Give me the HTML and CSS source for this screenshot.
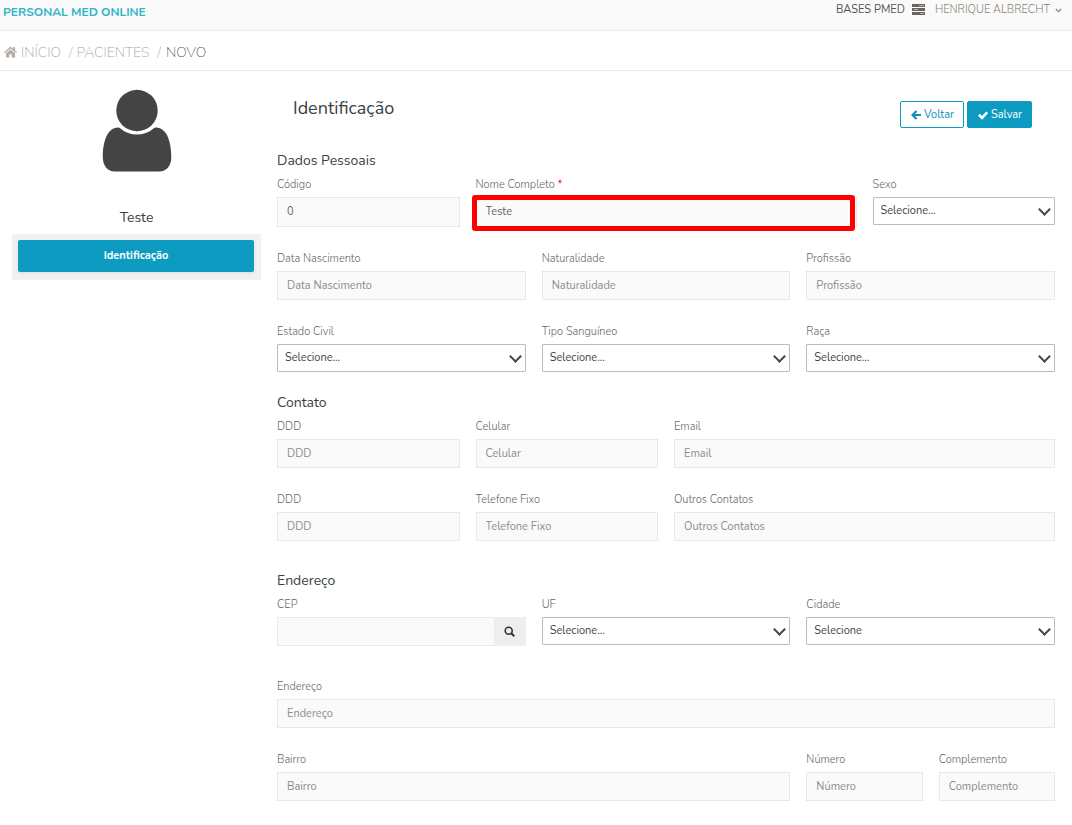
FILE: index.html
```html
<!DOCTYPE html>
<html lang="pt-BR">
<head>
<meta charset="utf-8">
<meta name="viewport" content="width=device-width, initial-scale=1">
<title>Personal Med Online</title>
<link rel="stylesheet" href="styles.css">
</head>
<body>
<header class="topbar">
  <a class="brand" href="#">PERSONAL MED ONLINE</a>
  <nav class="account">
    <a class="bases" href="#">BASES PMED
      <svg class="icon-server" viewBox="0 0 13 11" aria-hidden="true"><path d="M0 0h13v3H0zM0 4h13v3H0zM0 8h13v3H0z"/><path class="slot" d="M7 1h5v1H7zM2 5h4v1H2zM8 9h4v1H8z"/></svg>
    </a>
    <button class="user" type="button">HENRIQUE ALBRECHT
      <svg class="icon-caret" viewBox="0 0 7 5" aria-hidden="true"><path d="M.8 1l2.700 2.700L6.200 1" fill="none" stroke="currentColor" stroke-width="1.200"/></svg>
    </button>
  </nav>
</header>

<nav class="breadcrumb">
  <svg class="icon-home" viewBox="0 0 13 12" aria-hidden="true"><path d="M6.500 0.500L9 2.700V1h2v3.400l2 1.900-.8 1-5.700-4.900L.8 7.300 0 6.300z"/><path d="M2 7.300l4.500-3.800L11 7.300V11.500H7.700V8.300H5.300v3.200H2z"/></svg>
  <a href="#">INÍCIO</a>
  <span>/</span>
  <a href="#">PACIENTES</a>
  <span>/</span>
  <span class="current">NOVO</span>
</nav>

<div class="layout">
  <aside class="sidebar">
    <svg class="avatar" viewBox="0 0 70 84" aria-hidden="true"><circle cx="35" cy="21.500" r="20.700"/><path d="M16 38.500C5 39 .8 53 .8 68c0 9 5 14.500 12 14.500h44.500c7 0 12-5.500 12-14.500C69.300 53 65 39 54 38.500q-1.500 0-2.500 1C42.500 47.500 27.500 47.500 18.500 39.500q-1-1-2.500-1z"/></svg>
    <p class="patient">Teste</p>
    <div class="tabs"><button class="tab" type="button">Identificação</button></div>
  </aside>

  <main class="content">
    <div class="title-row">
      <h1>Identificação</h1>
      <div class="actions">
        <button class="btn" type="button"><svg viewBox="0 0 10 10" aria-hidden="true"><path d="M5.500 1L1.500 5l4 4M2 5h8" fill="none" stroke="currentColor" stroke-width="2.200"/></svg>Voltar</button>
        <button class="btn primary" type="submit" form="paciente"><svg viewBox="0 0 10 10" aria-hidden="true"><path d="M.8 4.800l3.200 3 5.200-5.500" fill="none" stroke="currentColor" stroke-width="2.600"/></svg>Salvar</button>
      </div>
    </div>

    <form id="paciente">
      <section>
        <h2>Dados Pessoais</h2>
        <div class="grid">
          <div class="field w3"><label for="codigo">Código</label><input class="tall" id="codigo" value="0"></div>
          <div class="field w6"><label for="nome">Nome Completo <span class="req">*</span></label><div class="highlight"><input class="tall" id="nome" value="Teste"></div></div>
          <div class="field w3"><label for="sexo">Sexo</label><div class="select"><select id="sexo"><option>Selecione...</option></select></div></div>
          <div class="field w4"><label for="nasc">Data Nascimento</label><input id="nasc" placeholder="Data Nascimento"></div>
          <div class="field w4"><label for="nat">Naturalidade</label><input id="nat" placeholder="Naturalidade"></div>
          <div class="field w4"><label for="prof">Profissão</label><input id="prof" placeholder="Profissão"></div>
          <div class="field w4"><label for="civil">Estado Civil</label><div class="select"><select id="civil"><option>Selecione...</option></select></div></div>
          <div class="field w4"><label for="sangue">Tipo Sanguíneo</label><div class="select"><select id="sangue"><option>Selecione...</option></select></div></div>
          <div class="field w4"><label for="raca">Raça</label><div class="select"><select id="raca"><option>Selecione...</option></select></div></div>
        </div>
      </section>

      <section class="contact">
        <h2>Contato</h2>
        <div class="grid">
          <div class="field w3"><label for="ddd1">DDD</label><input id="ddd1" placeholder="DDD"></div>
          <div class="field w3"><label for="cel">Celular</label><input id="cel" placeholder="Celular"></div>
          <div class="field w6"><label for="email">Email</label><input id="email" type="email" placeholder="Email"></div>
          <div class="field w3"><label for="ddd2">DDD</label><input id="ddd2" placeholder="DDD"></div>
          <div class="field w3"><label for="fixo">Telefone Fixo</label><input id="fixo" placeholder="Telefone Fixo"></div>
          <div class="field w6"><label for="outros">Outros Contatos</label><input id="outros" placeholder="Outros Contatos"></div>
        </div>
      </section>

      <section class="address">
        <h2>Endereço</h2>
        <div class="grid">
          <div class="field w4 spaced"><label for="cep">CEP</label><div class="group"><input id="cep"><button class="search" type="button" aria-label="Buscar CEP"><svg viewBox="0 0 11 11" aria-hidden="true"><circle cx="4.700" cy="4.700" r="3.500" fill="none" stroke="currentColor" stroke-width="1.600"/><path d="M7.300 7.300l3 3" stroke="currentColor" stroke-width="2"/></svg></button></div></div>
          <div class="field w4"><label for="uf">UF</label><div class="select"><select id="uf"><option>Selecione...</option></select></div></div>
          <div class="field w4"><label for="cidade">Cidade</label><div class="select"><select id="cidade"><option>Selecione</option></select></div></div>
          <div class="field w12"><label for="end">Endereço</label><input id="end" placeholder="Endereço"></div>
          <div class="field w8"><label for="bairro">Bairro</label><input id="bairro" placeholder="Bairro"></div>
          <div class="field w2"><label for="num">Número</label><input id="num" placeholder="Número"></div>
          <div class="field w2"><label for="comp">Complemento</label><input id="comp" placeholder="Complemento"></div>
        </div>
      </section>
    </form>
  </main>
</div>
</body>
</html>
```
FILE: styles.css
```css
* { box-sizing: border-box; }
body { margin: 0; background: #fff; color: #3a3f44; font-family: Nunito, Lato, sans-serif; font-size: 11px; }
a { color: inherit; text-decoration: none; }
button, input, select { font: inherit; color: inherit; margin: 0; }
button { cursor: pointer; }
svg { flex: none; fill: currentColor; }

.topbar { display: flex; justify-content: space-between; align-items: flex-start; height: 31px; padding: 0 10px 0 3px; background: #fafafa; border-bottom: 1px solid #ebebeb; }
.brand { color: #2fb5c7; font-size: 12px; font-weight: 700; line-height: 24px; }
.account { display: flex; gap: 10px; line-height: 18px; }
.bases { display: flex; align-items: center; gap: 7px; color: #555; line-height: 20px; }
.icon-server { width: 13px; height: 11px; margin-bottom: 2px; color: #6b625c; }
.slot { fill: #b8b2ad; }
.user { display: flex; align-items: center; gap: 5px; padding: 0; border: 0; background: none; color: #8c8373; font-weight: 300; line-height: 20px; }
.icon-caret { width: 7px; height: 5px; }

.breadcrumb { display: flex; align-items: center; gap: 4px; height: 40px; padding: 3px 4px 0; border-bottom: 1px solid #ebebeb; color: #aaa29b; font-size: 14px; font-weight: 200; }
.breadcrumb span { padding-left: 4px; }
.breadcrumb .current { padding-left: 1px; color: #555; }
.icon-home { width: 13px; height: 12px; color: #b5aea8; }

.layout { display: grid; grid-template-columns: 1fr 3fr; }
.sidebar { padding: 18px 7px 0 12px; text-align: center; }
.avatar { display: block; width: 70px; height: 84px; margin: 0 auto; color: #444; }
.patient { margin: 35px 0 6px; font-size: 14px; line-height: 20px; }
.tabs { padding: 6px 7px 8px 6px; background: #f1f1f1; }
.tab { display: block; width: 100%; height: 32px; padding: 0 0 2px; border: 0; border-radius: 2px; background: #0e9bc1; box-shadow: 0 1px 3px #ddd; color: #fff; font-weight: 700; }

.content { padding: 23px 17px 23px 9px; }
.title-row { display: flex; justify-content: space-between; padding: 0 23px 0 16px; }
h1, h2 { margin: 0; font-weight: 400; }
h1 { font-size: 18px; line-height: 28px; }
h2 { font-size: 14px; line-height: 26px; }
.actions { display: flex; gap: 3px; padding-top: 7px; }
.btn { display: flex; align-items: center; justify-content: center; gap: 3px; height: 27px; padding: 0 9px 0 10px; border: 1px solid #0e9bc1; border-radius: 2px; background: #fff; color: #0e8fb5; }
.btn svg { width: 10px; height: 10px; }
.primary { background: #0e9bc1; color: #fff; }

section { padding-top: 20px; }
.contact { padding-top: 18px; }
.address { padding-top: 27px; }
.grid { display: grid; grid-template-columns: repeat(12, minmax(0, 1fr)); gap: 21px 16px; }
.field { display: flex; flex-direction: column; gap: 1px; }
.w2 { grid-column: span 2; }
.w3 { grid-column: span 3; }
.w4 { grid-column: span 4; }
.w6 { grid-column: span 6; }
.w8 { grid-column: span 8; }
.w12 { grid-column: span 12; }
.spaced { padding-bottom: 9px; }
label { color: #666; font-weight: 300; line-height: 22px; }
.req { color: #f00; }
input { display: block; width: 100%; height: 29px; padding: 0 9px; border: 1px solid #e8e8e8; border-radius: 0; background: #fafafa; color: #666; }
.tall { height: 30px; padding-bottom: 2px; }
input::placeholder { color: #8c8c8c; opacity: 1; }
.select { position: relative; }
.select::after { content: ""; position: absolute; top: 8px; right: 6px; width: 7px; height: 7px; border: solid #444; border-width: 0 2px 2px 0; transform: rotate(45deg); pointer-events: none; }
select { display: block; width: 100%; height: 28px; padding: 0 7px 2px; border: 1px solid #bbb; border-radius: 1px; appearance: none; background: #fff; color: #444; }
.highlight { position: relative; }
.highlight::after { content: ""; position: absolute; inset: -2px 2px -4px -4px; border: 5px solid #f00; border-radius: 3px; pointer-events: none; }
.group { display: flex; }
.group input { flex: 1; min-width: 0; border-right: 0; }
.search { display: grid; place-items: center; width: 32px; padding: 0; border: 0; background: #eee; color: #333; }
.search svg { width: 11px; height: 11px; }
```
